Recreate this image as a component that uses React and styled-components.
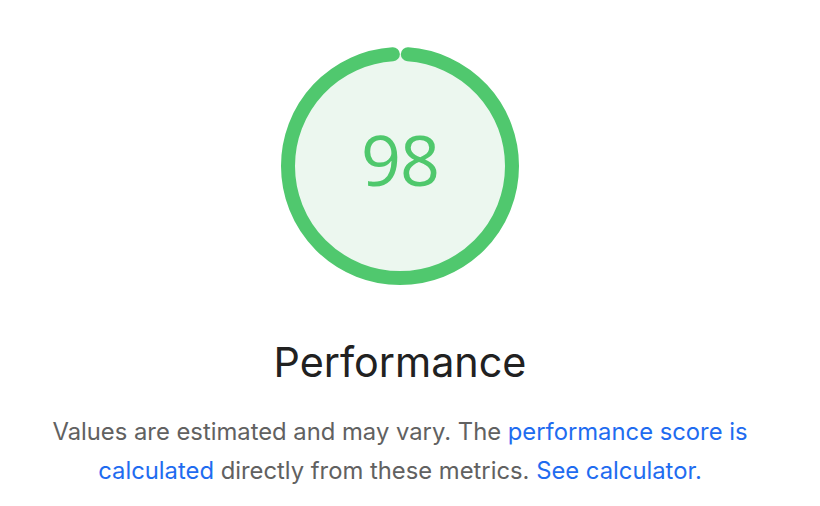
import styled, { createGlobalStyle } from 'styled-components'

const GlobalStyle = createGlobalStyle`
    html, body {
        margin: 0;
        padding: 0;
        background: #ffffff;
    }
    body {
        font-family: Inter, "Liberation Sans", sans-serif;
    }
`

const Page = styled.main`
    width: 800px;
    display: flex;
    flex-direction: column;
    align-items: center;
    padding-top: 46px;
`

const GaugeWrap = styled.div`
    position: relative;
    width: 240px;
    height: 240px;
`

const Score = styled.span`
    position: absolute;
    inset: 0;
    display: flex;
    align-items: center;
    justify-content: center;
    padding-bottom: 14px;
    font-family: "Open Sans", sans-serif;
    font-size: 70px;
    color: #4fc86c;
    letter-spacing: -1px;
`

const Titulo = styled.h1`
    margin: 52px 0 0;
    font-size: 41.3px;
    line-height: 48px;
    font-weight: 400;
    color: #212121;
`

const Descricao = styled.p`
    margin: 26px 0 0;
    max-width: 740px;
    text-align: center;
    font-size: 23.8px;
    line-height: 39px;
    color: #616161;
`

const Link = styled.a`
    color: #1f6cf0;
    text-decoration: none;
`

const RAIO = 112
const CIRC = 2 * Math.PI * RAIO
const LACUNA = 16

function Gauge({ score }) {
    const arco = (CIRC - LACUNA) * (score / 100) / 0.98
    return (
        <GaugeWrap>
            <svg width="240" height="240" viewBox="0 0 240 240">
                <circle cx="120" cy="120" r={RAIO} fill="#ecf7ef" />
                <circle
                    cx="120"
                    cy="120"
                    r={RAIO}
                    fill="none"
                    stroke="#50c86e"
                    strokeWidth="14"
                    strokeLinecap="round"
                    strokeDasharray={`${arco} ${CIRC}`}
                    strokeDashoffset={-LACUNA / 2}
                    transform="rotate(-90 120 120)"
                />
            </svg>
            <Score>{score}</Score>
        </GaugeWrap>
    )
}

export default function App() {
    return (
        <>
            <GlobalStyle />
            <Page>
                <Gauge score={98} />
                <Titulo>Performance</Titulo>
                <Descricao>
                    Values are estimated and may vary. The{' '}
                    <Link href="#">performance score is calculated</Link>{' '}
                    directly from these metrics.{' '}
                    <Link href="#">See calculator.</Link>
                </Descricao>
            </Page>
        </>
    )
}
